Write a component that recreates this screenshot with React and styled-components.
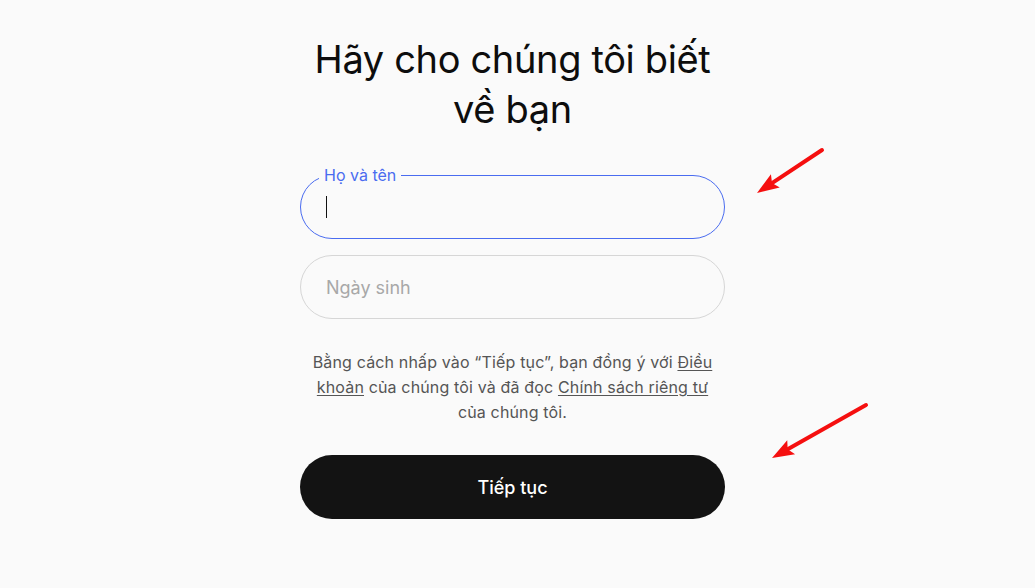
import React from "react";
import styled, { createGlobalStyle } from "styled-components";

const Global = createGlobalStyle`
  html, body { margin: 0; padding: 0; background: #fafafa; }
  body { font-family: Inter, "Noto Sans", sans-serif; }
  * { box-sizing: border-box; }
`;

const Page = styled.div`
  position: relative;
  width: 1035px;
  height: 588px;
  overflow: hidden;
  background: #fafafa;
  display: flex;
  justify-content: center;
  padding: 34px 10px 0 0;
`;

const Form = styled.div`
  width: 425px;
  display: flex;
  flex-direction: column;
  align-items: stretch;
`;

const Title = styled.h1`
  margin: 0 0 41px;
  font-family: Inter, "Noto Sans", sans-serif;
  font-weight: 400;
  font-size: 38px;
  line-height: 50px;
  letter-spacing: -0.35px;
  color: #0d0d0d;
  text-align: center;
  white-space: nowrap;
`;

const Field = styled.div`
  position: relative;
  height: 64px;
  border-radius: 32px;
  border: 1px solid ${(p) => (p.$active ? "#4a6cf0" : "#d6d6d6")};
  background: #fafafa;
  display: flex;
  align-items: center;
  padding: 0 25px;
  margin-bottom: 16px;
`;

const FloatLabel = styled.span`
  position: absolute;
  top: -10px;
  left: 18px;
  padding: 0 5px;
  background: #fafafa;
  font-size: 16px;
  line-height: 18px;
  color: #4a6cf0;
`;

const Placeholder = styled.span`
  font-size: 18px;
  color: #a8a8a8;
`;

const Caret = styled.span`
  display: block;
  width: 1px;
  height: 22px;
  background: #111;
`;

const Legal = styled.p`
  margin: 15px 0 30px;
  font-size: 16px;
  line-height: 25px;
  letter-spacing: 0.15px;
  color: #555;
  text-align: center;
  padding: 0 6px;
`;

const Link = styled.a`
  color: #555;
  text-decoration: underline;
  text-underline-offset: 2px;
`;

const Button = styled.button`
  height: 64px;
  border: none;
  border-radius: 32px;
  background: #131313;
  color: #fff;
  font-family: Inter, "Noto Sans", sans-serif;
  font-size: 18px;
  font-weight: 500;
  cursor: pointer;
`;

const Arrows = styled.svg`
  position: absolute;
  left: 0;
  top: 0;
  pointer-events: none;
`;

function Arrow({ x1, y1, x2, y2 }) {
  const dx = x2 - x1;
  const dy = y2 - y1;
  const len = Math.hypot(dx, dy);
  const ux = dx / len;
  const uy = dy / len;
  const hl = 22;
  const hw = 8;
  const bx = x2 - ux * hl;
  const by = y2 - uy * hl;
  const px = -uy;
  const py = ux;
  const lx = x2 - ux * (hl - 4);
  const ly = y2 - uy * (hl - 4);
  return (
    <g>
      <line x1={x1} y1={y1} x2={lx} y2={ly} stroke="#f50f0f" strokeWidth="4" strokeLinecap="round" />
      <polygon
        points={`${x2},${y2} ${bx + px * hw},${by + py * hw} ${lx},${ly} ${bx - px * hw},${by - py * hw}`}
        fill="#f50f0f"
      />
    </g>
  );
}

export default function App() {
  return (
    <>
      <Global />
      <Page>
        <Form>
          <Title>
            Hãy cho chúng tôi biết
            <br />
            về bạn
          </Title>
          <Field $active>
            <FloatLabel>Họ và tên</FloatLabel>
            <Caret />
          </Field>
          <Field>
            <Placeholder>Ngày sinh</Placeholder>
          </Field>
          <Legal>
            Bằng cách nhấp vào “Tiếp tục”, bạn đồng ý với <Link>Điều khoản</Link> của chúng tôi và đã đọc{" "}
            <Link>Chính sách riêng tư</Link> của chúng tôi.
          </Legal>
          <Button>Tiếp tục</Button>
        </Form>
        <Arrows width="1035" height="588">
          <Arrow x1={822} y1={150} x2={757} y2={193} />
          <Arrow x1={866} y1={405} x2={772} y2={458} />
        </Arrows>
      </Page>
    </>
  );
}
